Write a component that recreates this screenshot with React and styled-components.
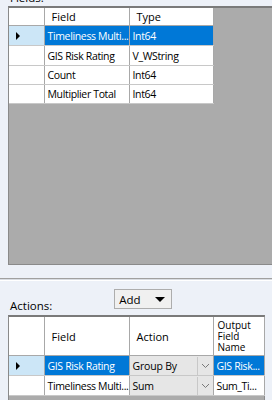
import React from "react";
import styled, { createGlobalStyle } from "styled-components";

const Global = createGlobalStyle`
  html, body { margin: 0; padding: 0; }
  body { background: #edf1f8; font-family: "Open Sans", "Noto Sans", sans-serif; }
`;

const Page = styled.div`
  width: 272px;
  height: 400px;
  overflow: hidden;
  position: relative;
  background: #edf1f8;
  color: #000;
  font-size: 10.5px;
`;

const SectionLabel = styled.div`
  font-size: 11.5px;
  line-height: 16px;
  padding-left: ${(p) => p.$indent || 10}px;
  margin-top: ${(p) => p.$mt || 0}px;
`;

const GridBox = styled.div`
  margin-left: 8px;
  width: ${(p) => p.$w}px;
  height: ${(p) => p.$h}px;
  background: #ababab;
  border: 1px solid #8a8a8a;
  border-top: 2px solid #7a7a7a;
  box-sizing: border-box;
  margin-top: ${(p) => p.$mt || 0}px;
`;

const Table = styled.table`
  border-collapse: collapse;
  background: #fff;
  table-layout: fixed;
  width: ${(p) => p.$w}px;
`;

const HeadCell = styled.th`
  height: ${(p) => p.$h}px;
  padding: 0 0 0 ${(p) => p.$pl ?? 7}px;
  font-weight: normal;
  font-size: 11px;
  text-align: left;
  vertical-align: middle;
  border-right: 1px solid #a8a8a8;
  border-bottom: 1px solid #a8a8a8;
  line-height: 11px;
  background: #fff;
  white-space: nowrap;
  overflow: hidden;
`;

const StackLine = styled.span`
  display: block;
  font-size: 10px;
  line-height: 11px;
  height: 11px;
`;

const Cell = styled.td`
  height: ${(p) => p.$h || 18}px;
  padding: 0 0 0 3px;
  border-right: 1px solid #a8a8a8;
  border-bottom: 1px solid #c8c8c8;
  white-space: nowrap;
  overflow: hidden;
  letter-spacing: -0.35px;
  background: ${(p) => (p.$sel ? "#0078d7" : "#fff")};
  color: ${(p) => (p.$sel ? "#fff" : "#000")};
`;

const RowHead = styled.td`
  padding: 0 0 0 7px;
  border-right: 1px solid #a8a8a8;
  border-bottom: 1px solid #c8c8c8;
  background: ${(p) => (p.$sel ? "#cce6f7" : "#fff")};
`;

const Arrow = styled.span`
  display: block;
  width: 0;
  height: 0;
  border-top: 4px solid transparent;
  border-bottom: 4px solid transparent;
  border-left: 4px solid #000;
`;

const ComboCell = styled.td`
  padding: 0;
  border-right: 1px solid #a8a8a8;
  border-bottom: 1px solid #c8c8c8;
  background: #e6e6e6;
`;

const Combo = styled.div`
  display: flex;
  height: 18px;
  align-items: stretch;
`;

const ComboText = styled.span`
  flex: 1;
  padding-left: 3px;
  display: flex;
  align-items: center;
  white-space: nowrap;
  overflow: hidden;
  letter-spacing: -0.2px;
`;

const ComboBtn = styled.span`
  width: 15px;
  border-left: 1px solid #c8c8c8;
  display: flex;
  align-items: center;
  justify-content: center;
`;

const Splitter = styled.div`
  margin-top: 13px;
  height: 1px;
  border-top: 1px solid #a0a0a0;
  border-bottom: 1px solid #ffffff;
  background: #d8dce2;
`;

const ActionsBar = styled.div`
  display: flex;
  align-items: flex-start;
  height: 34px;
  margin-top: 7px;
`;

const AddButton = styled.div`
  margin-left: 62px;
  margin-top: 1px;
  width: 58px;
  height: 20px;
  box-sizing: border-box;
  border: 1px solid #adadad;
  background: #f0f0f0;
  display: flex;
  align-items: center;
  justify-content: space-between;
  padding: 0 6px 0 4px;
  font-size: 11.5px;
`;

const DownTri = styled.span`
  width: 0;
  height: 0;
  border-left: 5px solid transparent;
  border-right: 5px solid transparent;
  border-top: 5px solid #000;
`;

const Chevron = () => (
  <svg width="9" height="6" viewBox="0 0 9 6">
    <path d="M1 1 L4.5 4.5 L8 1" fill="none" stroke="#7a7a7a" strokeWidth="1" />
  </svg>
);

const fields = [
  ["Timeliness Multi...", "Int64"],
  ["GIS Risk Rating", "V_WString"],
  ["Count", "Int64"],
  ["Multiplier Total", "Int64"],
];

const actions = [
  ["GIS Risk Rating", "Group By", "GIS Risk..."],
  ["Timeliness Multi...", "Sum", "Sum_Ti..."],
];

export default function App() {
  return (
    <Page>
      <Global />
      <SectionLabel $mt={-10}>Fields:</SectionLabel>
      <GridBox $w={300} $h={259} $mt={0}>
        <Table $w={204}>
          <colgroup>
            <col style={{ width: 35 }} />
            <col style={{ width: 85 }} />
            <col style={{ width: 84 }} />
          </colgroup>
          <thead>
            <tr>
              <HeadCell $h={17} />
              <HeadCell $h={17}>Field</HeadCell>
              <HeadCell $h={17}>Type</HeadCell>
            </tr>
          </thead>
          <tbody>
            {fields.map(([f, t], i) => (
              <tr key={f}>
                <RowHead $sel={i === 0}>{i === 0 && <Arrow />}</RowHead>
                <Cell $sel={i === 0} $h={i === 0 || i === 1 ? 19 : 18}>{f}</Cell>
                <Cell $sel={i === 0} $h={i === 0 || i === 1 ? 19 : 18}>{t}</Cell>
              </tr>
            ))}
          </tbody>
        </Table>
      </GridBox>
      <Splitter />
      <ActionsBar>
        <SectionLabel $mt={10}>Actions:</SectionLabel>
        <AddButton>
          <span>Add</span>
          <DownTri />
        </AddButton>
      </ActionsBar>
      <GridBox $w={257} $h={100} $mt={-7}>
        <Table $w={255}>
          <colgroup>
            <col style={{ width: 35 }} />
            <col style={{ width: 85 }} />
            <col style={{ width: 84 }} />
            <col style={{ width: 51 }} />
          </colgroup>
          <thead>
            <tr>
              <HeadCell $h={38} />
              <HeadCell $h={38}>Field</HeadCell>
              <HeadCell $h={38}>Action</HeadCell>
              <HeadCell $h={38} $pl={4}>
                <StackLine>Output</StackLine>
                <StackLine>Field</StackLine>
                <StackLine>Name</StackLine>
              </HeadCell>
            </tr>
          </thead>
          <tbody>
            {actions.map(([f, a, o], i) => (
              <tr key={f}>
                <RowHead $sel={i === 0}>{i === 0 && <Arrow />}</RowHead>
                <Cell $sel={i === 0} $h={19}>{f}</Cell>
                <ComboCell>
                  <Combo>
                    <ComboText>{a}</ComboText>
                    <ComboBtn>
                      <Chevron />
                    </ComboBtn>
                  </Combo>
                </ComboCell>
                <Cell $sel={i === 0} $h={19}>{o}</Cell>
              </tr>
            ))}
          </tbody>
        </Table>
      </GridBox>
    </Page>
  );
}
